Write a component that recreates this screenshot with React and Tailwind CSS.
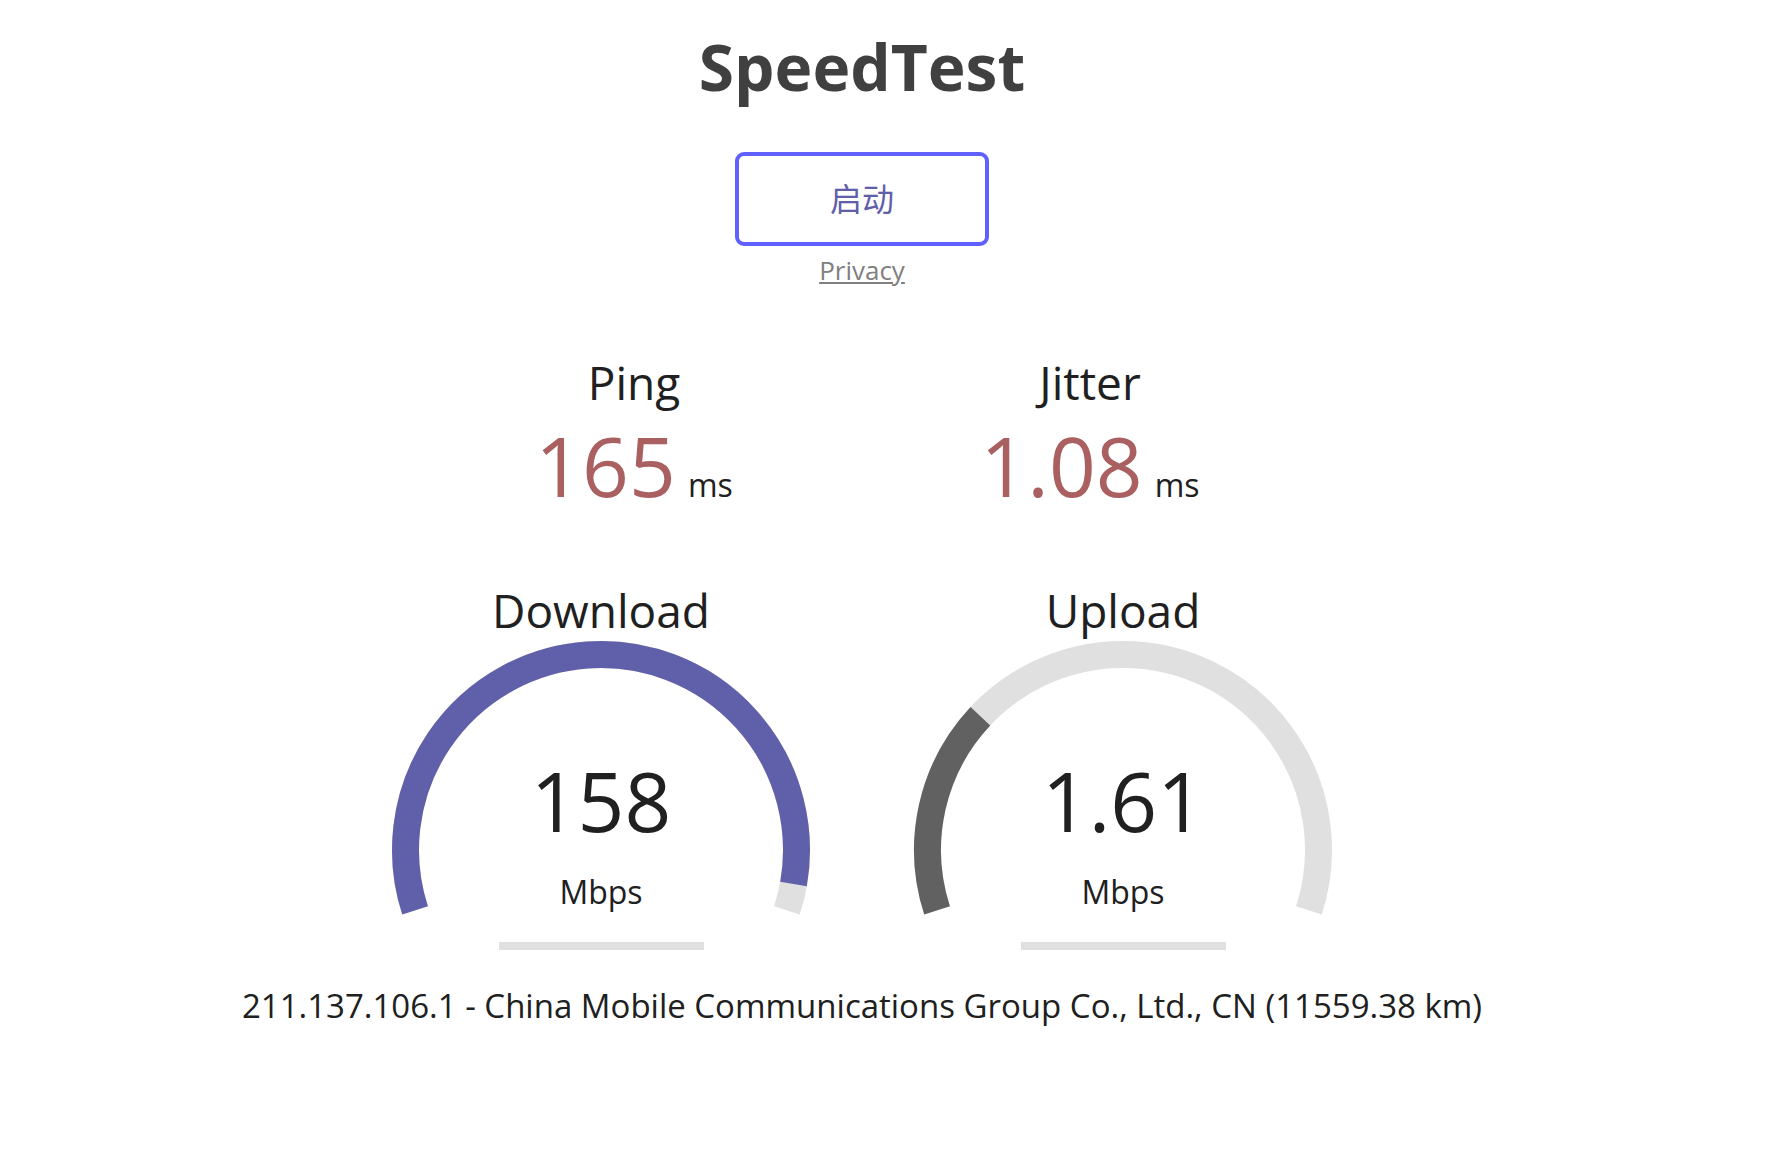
const font = { fontFamily: '"Open Sans", "Noto Sans CJK SC", sans-serif' };

const START = 162;
const SWEEP = 216;
const R = 195.5;
const CX = 220;
const CY = 216;

const pt = (deg) => {
  const a = (deg * Math.PI) / 180;
  return [CX + R * Math.cos(a), CY + R * Math.sin(a)];
};

const arcPath = (from, to) => {
  const [x1, y1] = pt(from);
  const [x2, y2] = pt(to);
  const large = to - from > 180 ? 1 : 0;
  return `M ${x1} ${y1} A ${R} ${R} 0 ${large} 1 ${x2} ${y2}`;
};

const amount = (mbps) => 1 - 1 / Math.pow(1.3, Math.sqrt(mbps));

const Gauge = ({ label, value, color }) => {
  const end = START + SWEEP * amount(parseFloat(value));
  return (
    <div className="flex flex-col items-center">
      <div className="text-[46px] leading-[48px] text-[#202020]">{label}</div>
      <svg width="440" height="320" viewBox="0 0 440 320">
        <path d={arcPath(START, START + SWEEP)} fill="none" stroke="#E0E0E0" strokeWidth="27" />
        <path d={arcPath(START, end)} fill="none" stroke={color} strokeWidth="27" />
        <text x={CX} y="198" textAnchor="middle" fontSize="82" fill="#202020" style={font}>
          {value}
        </text>
        <text x={CX} y="270" textAnchor="middle" fontSize="32" fill="#202020" style={font}>
          Mbps
        </text>
        <rect x={CX - 102} y="308" width="205" height="8" fill="#E0E0E0" />
      </svg>
    </div>
  );
};

const Stat = ({ label, value }) => (
  <div className="flex flex-col items-center">
    <div className="text-[46px] leading-[56px] text-[#202020]">{label}</div>
    <div className="mt-[10px] flex items-baseline">
      <span className="text-[82px] leading-[90px] text-[#AA6060]">{value}</span>
      <span className="ml-[12px] text-[32px] leading-[32px] text-[#202020]">ms</span>
    </div>
  </div>
);

export default function App() {
  return (
    <div className="min-h-screen bg-white" style={font}>
      <div className="w-[1724px] flex flex-col items-center pt-[27px]">
        <h1 className="text-[64px] leading-[80px] font-bold text-[#404040]">SpeedTest</h1>
        <button className="mt-[45px] w-[254px] h-[94px] border-[4px] border-[#6060FF] rounded-[9px] text-[32px] text-[#6060AA] bg-white">
          启动
        </button>
        <a href="#" className="mt-[6px] text-[26px] leading-[36px] text-[#808080] underline">
          Privacy
        </a>
        <div className="mt-[66px] grid grid-cols-[456px_456px]">
          <Stat label="Ping" value="165" />
          <Stat label="Jitter" value="1.08" />
        </div>
        <div className="mt-[76px] grid grid-cols-[522px_522px]">
          <Gauge label="Download" value="158" color="#6060AA" />
          <Gauge label="Upload" value="1.61" color="#616161" />
        </div>
        <div className="mt-[30px] text-[33px] leading-[44px] text-[#202020]">
          211.137.106.1 - China Mobile Communications Group Co., Ltd., CN (11559.38 km)
        </div>
      </div>
    </div>
  );
}
